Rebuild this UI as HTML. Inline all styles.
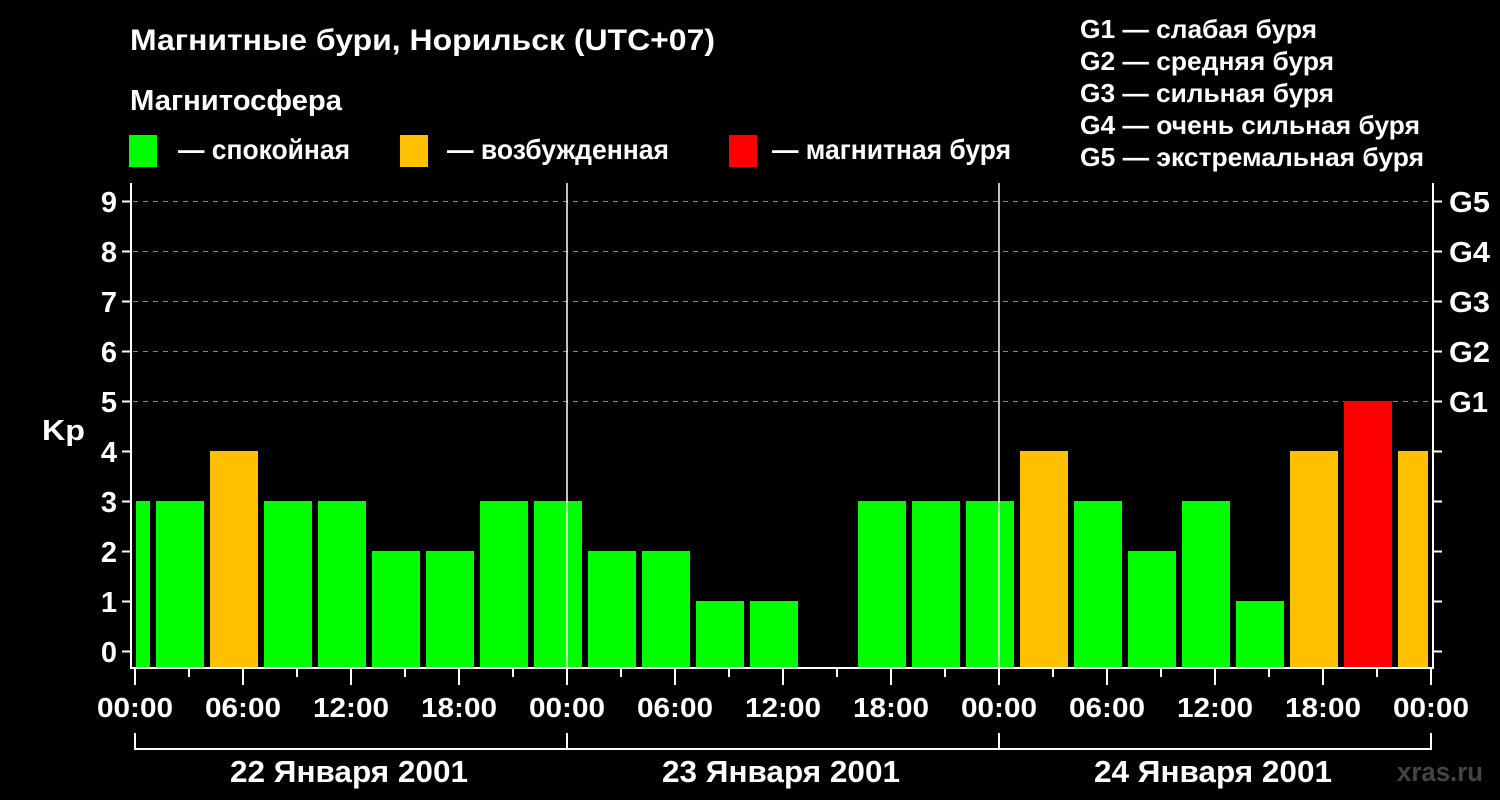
<!DOCTYPE html>
<html><head><meta charset="utf-8"><style>html,body{margin:0;padding:0;background:#000;}svg{display:block}</style></head>
<body>
<svg width="1500" height="800" xmlns="http://www.w3.org/2000/svg" font-family="Liberation Sans, Arial, sans-serif" font-weight="bold" fill="#fff">
<rect width="1500" height="800" fill="#000"/>
<text x="130" y="50" font-size="30" textLength="585" lengthAdjust="spacingAndGlyphs">Магнитные бури, Норильск (UTC+07)</text>
<text x="130" y="110" font-size="29" textLength="212" lengthAdjust="spacingAndGlyphs">Магнитосфера</text>
<rect x="129" y="135" width="28" height="32" fill="#00ff00"/>
<text x="178" y="159" font-size="28" textLength="172" lengthAdjust="spacingAndGlyphs">— спокойная</text>
<rect x="400" y="135" width="28" height="32" fill="#ffc000"/>
<text x="447" y="159" font-size="28" textLength="222" lengthAdjust="spacingAndGlyphs">— возбужденная</text>
<rect x="729" y="135" width="28" height="32" fill="#ff0000"/>
<text x="772" y="159" font-size="28" textLength="239" lengthAdjust="spacingAndGlyphs">— магнитная буря</text>
<g font-size="26">
<text x="1080" y="38" textLength="237" lengthAdjust="spacingAndGlyphs">G1 — слабая буря</text>
<text x="1080" y="70" textLength="254" lengthAdjust="spacingAndGlyphs">G2 — средняя буря</text>
<text x="1080" y="102" textLength="254" lengthAdjust="spacingAndGlyphs">G3 — сильная буря</text>
<text x="1080" y="134" textLength="340" lengthAdjust="spacingAndGlyphs">G4 — очень сильная буря</text>
<text x="1080" y="166" textLength="344" lengthAdjust="spacingAndGlyphs">G5 — экстремальная буря</text>
</g>
<g stroke="#888" stroke-width="1" stroke-dasharray="5,5">
<line x1="133" y1="201.5" x2="1432" y2="201.5"/>
<line x1="133" y1="251.5" x2="1432" y2="251.5"/>
<line x1="133" y1="301.5" x2="1432" y2="301.5"/>
<line x1="133" y1="351.5" x2="1432" y2="351.5"/>
<line x1="133" y1="401.5" x2="1432" y2="401.5"/>
</g>
<g>
<rect x="136" y="501" width="14" height="166" fill="#00ff00"/>
<rect x="156" y="501" width="48" height="166" fill="#00ff00"/>
<rect x="210" y="451" width="48" height="216" fill="#ffc000"/>
<rect x="264" y="501" width="48" height="166" fill="#00ff00"/>
<rect x="318" y="501" width="48" height="166" fill="#00ff00"/>
<rect x="372" y="551" width="48" height="116" fill="#00ff00"/>
<rect x="426" y="551" width="48" height="116" fill="#00ff00"/>
<rect x="480" y="501" width="48" height="166" fill="#00ff00"/>
<rect x="534" y="501" width="48" height="166" fill="#00ff00"/>
<rect x="588" y="551" width="48" height="116" fill="#00ff00"/>
<rect x="642" y="551" width="48" height="116" fill="#00ff00"/>
<rect x="696" y="601" width="48" height="66" fill="#00ff00"/>
<rect x="750" y="601" width="48" height="66" fill="#00ff00"/>
<rect x="858" y="501" width="48" height="166" fill="#00ff00"/>
<rect x="912" y="501" width="48" height="166" fill="#00ff00"/>
<rect x="966" y="501" width="48" height="166" fill="#00ff00"/>
<rect x="1020" y="451" width="48" height="216" fill="#ffc000"/>
<rect x="1074" y="501" width="48" height="166" fill="#00ff00"/>
<rect x="1128" y="551" width="48" height="116" fill="#00ff00"/>
<rect x="1182" y="501" width="48" height="166" fill="#00ff00"/>
<rect x="1236" y="601" width="48" height="66" fill="#00ff00"/>
<rect x="1290" y="451" width="48" height="216" fill="#ffc000"/>
<rect x="1344" y="401" width="48" height="266" fill="#ff0000"/>
<rect x="1398" y="451" width="30" height="216" fill="#ffc000"/>
</g>
<g stroke="#fff" stroke-width="2" fill="none">
<path d="M131 668 V183 M1433 183 V668 M130 668 H1434"/>
<path d="M567 183 V668 M999 183 V668" stroke-width="1.5"/>
<path d="M122 201.5 H131 M122 251.5 H131 M122 301.5 H131 M122 351.5 H131 M122 401.5 H131 M122 451.5 H131 M122 501.5 H131 M122 551.5 H131 M122 601.5 H131 M122 651.5 H131"/>
<path d="M1433 201.5 H1442 M1433 251.5 H1442 M1433 301.5 H1442 M1433 351.5 H1442 M1433 401.5 H1442 M1433 451.5 H1442 M1433 501.5 H1442 M1433 551.5 H1442 M1433 601.5 H1442 M1433 651.5 H1442"/>
<path d="M135 668V685 M189 668V677 M243 668V685 M297 668V677 M351 668V685 M405 668V677 M459 668V685 M513 668V677 M567 668V685 M621 668V677 M675 668V685 M729 668V677 M783 668V685 M837 668V677 M891 668V685 M945 668V677 M999 668V685 M1053 668V677 M1107 668V685 M1161 668V677 M1215 668V685 M1269 668V677 M1323 668V685 M1377 668V677 M1431 668V685"/>
<path d="M135 733 V749 H1431 V733 M567 733 V749 M999 733 V749"/>
</g>
<g font-size="29" text-anchor="end">
<text x="117" y="212">9</text><text x="117" y="262">8</text><text x="117" y="312">7</text><text x="117" y="362">6</text><text x="117" y="412">5</text><text x="117" y="462">4</text><text x="117" y="512">3</text><text x="117" y="562">2</text><text x="117" y="612">1</text><text x="117" y="662">0</text>
</g>
<text x="42" y="440" font-size="29" textLength="43" lengthAdjust="spacingAndGlyphs">Kp</text>
<g font-size="29">
<text x="1449" y="212" textLength="41" lengthAdjust="spacingAndGlyphs">G5</text><text x="1449" y="262" textLength="41" lengthAdjust="spacingAndGlyphs">G4</text><text x="1449" y="312" textLength="41" lengthAdjust="spacingAndGlyphs">G3</text><text x="1449" y="362" textLength="41" lengthAdjust="spacingAndGlyphs">G2</text><text x="1449" y="412" textLength="39" lengthAdjust="spacingAndGlyphs">G1</text>
</g>
<g font-size="28" text-anchor="middle">
<text x="135" y="717" textLength="76" lengthAdjust="spacingAndGlyphs">00:00</text><text x="243" y="717" textLength="76" lengthAdjust="spacingAndGlyphs">06:00</text><text x="351" y="717" textLength="76" lengthAdjust="spacingAndGlyphs">12:00</text><text x="459" y="717" textLength="76" lengthAdjust="spacingAndGlyphs">18:00</text>
<text x="567" y="717" textLength="76" lengthAdjust="spacingAndGlyphs">00:00</text><text x="675" y="717" textLength="76" lengthAdjust="spacingAndGlyphs">06:00</text><text x="783" y="717" textLength="76" lengthAdjust="spacingAndGlyphs">12:00</text><text x="891" y="717" textLength="76" lengthAdjust="spacingAndGlyphs">18:00</text>
<text x="999" y="717" textLength="76" lengthAdjust="spacingAndGlyphs">00:00</text><text x="1107" y="717" textLength="76" lengthAdjust="spacingAndGlyphs">06:00</text><text x="1215" y="717" textLength="76" lengthAdjust="spacingAndGlyphs">12:00</text><text x="1323" y="717" textLength="76" lengthAdjust="spacingAndGlyphs">18:00</text>
<text x="1431" y="717" textLength="76" lengthAdjust="spacingAndGlyphs">00:00</text>
</g>
<g font-size="31" text-anchor="middle">
<text x="349" y="782" textLength="238" lengthAdjust="spacingAndGlyphs">22 Января 2001</text>
<text x="781" y="782" textLength="238" lengthAdjust="spacingAndGlyphs">23 Января 2001</text>
<text x="1213" y="782" textLength="238" lengthAdjust="spacingAndGlyphs">24 Января 2001</text>
</g>
<text x="1483" y="781" font-size="27" fill="#444" text-anchor="end" textLength="86" lengthAdjust="spacingAndGlyphs">xras.ru</text>
</svg>
</body></html>
